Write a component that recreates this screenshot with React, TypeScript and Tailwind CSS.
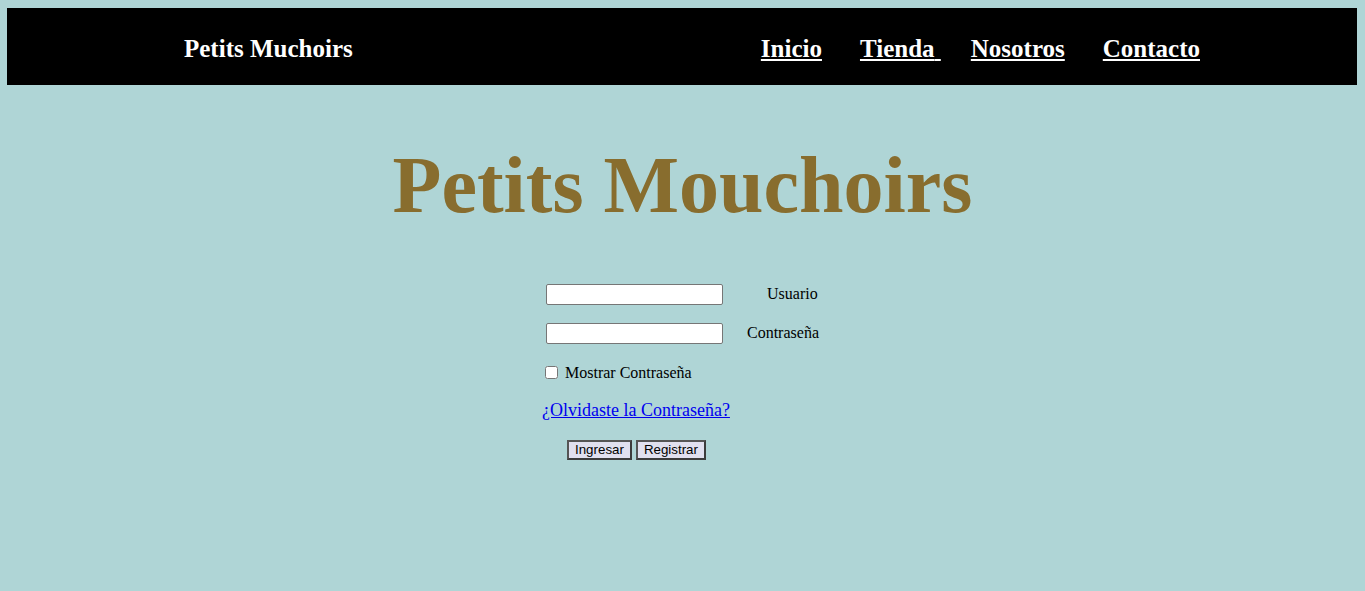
import React from "react";

export default function App() {
  const serif = { fontFamily: '"Liberation Serif", "Times New Roman", serif' };
  return (
    <div className="min-h-screen w-full bg-[#afd5d6] p-2" style={serif}>
      <header className="-ml-px flex h-[77px] items-center justify-between bg-black pl-[177px] pr-[157px] pt-[4px] text-[25px] font-bold text-white">
        <span>Petits Muchoirs</span>
        <nav className="flex items-center">
          <a href="#" className="underline">Inicio</a>
          <a href="#" className="ml-[38px] underline">Tienda{"\u00a0"}</a>
          <a href="#" className="ml-[30px] underline">Nosotros</a>
          <a href="#" className="ml-[38px] underline">Contacto</a>
        </nav>
      </header>

      <h1 className="my-[53.6px] text-center text-[80px] font-bold leading-[92px] text-[#886d2e]">
        Petits Mouchoirs
      </h1>

      <div className="flex justify-center">
        <form className="flex w-[281px] flex-col text-[16px] text-black">
          <div className="flex h-[21px] items-center">
            <input
              type="text"
              className="ml-[4px] h-[21px] w-[177px] rounded-[2px] border border-[#767676] bg-white"
            />
            <label className="ml-[44px] -mt-[2px]">Usuario</label>
          </div>
          <div className="mt-[18px] flex h-[21px] items-center">
            <input
              type="password"
              className="ml-[4px] h-[21px] w-[177px] rounded-[2px] border border-[#767676] bg-white"
            />
            <label className="ml-[24px] -mt-[2px]">Contraseña</label>
          </div>
          <div className="mt-[18px] flex h-[21px] items-center">
            <input type="checkbox" className="ml-[3px] -mt-[1px] h-[13px] w-[13px]" />
            <label className="ml-[7px] leading-[18px]">Mostrar Contraseña</label>
          </div>
          <div className="mt-[17px] leading-[21px]">
            <a href="#" className="text-[18px] text-[#0000ee] underline">
              ¿Olvidaste la Contraseña?
            </a>
          </div>
          <div className="mt-[19px] ml-[25px] flex gap-[4px]">
            <button
              type="button"
              className="h-[20px] border-2 border-[#3c3c3c] border-t-[#555] border-l-[#555] bg-[#e1e0ef] px-[6px] text-[13.33px] leading-[14px] text-black"
              style={{ fontFamily: '"Liberation Sans", Arial, sans-serif' }}
            >
              Ingresar
            </button>
            <button
              type="button"
              className="h-[20px] border-2 border-[#3c3c3c] border-t-[#555] border-l-[#555] bg-[#e1e0ef] px-[6px] text-[13.33px] leading-[14px] text-black"
              style={{ fontFamily: '"Liberation Sans", Arial, sans-serif' }}
            >
              Registrar
            </button>
          </div>
        </form>
      </div>
    </div>
  );
}
